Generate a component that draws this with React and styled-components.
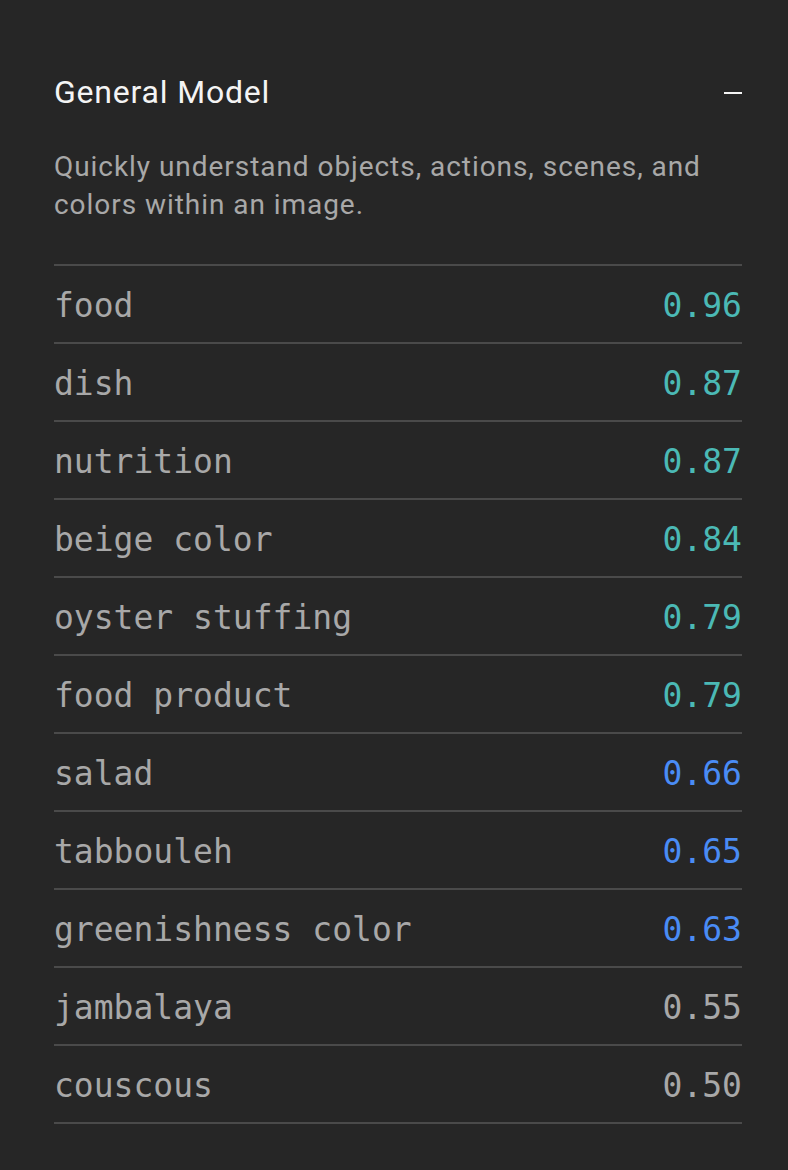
import styled, { createGlobalStyle } from 'styled-components'

const GlobalStyle = createGlobalStyle`
  html, body {
    margin: 0;
    background: #262626;
  }
`

const Panel = styled.section`
  box-sizing: border-box;
  width: 788px;
  min-height: 1170px;
  padding: 72px 46px 0 54px;
  background: #262626;
  font-family: Roboto, "Noto Sans", sans-serif;
`

const Header = styled.header`
  display: flex;
  align-items: center;
  justify-content: space-between;
`

const Title = styled.h2`
  margin: 0;
  font-size: 32px;
  line-height: 40px;
  font-weight: 400;
  letter-spacing: 0.8px;
  color: #f4f4f4;
`

const CollapseButton = styled.button`
  display: flex;
  align-items: center;
  justify-content: center;
  width: 18px;
  height: 18px;
  margin-top: 2px;
  padding: 0;
  border: 0;
  background: none;
  cursor: pointer;
  &::before {
    content: '';
    width: 18px;
    height: 2px;
    background: #f4f4f4;
  }
`

const Description = styled.p`
  margin: 36px 0 0;
  font-size: 28px;
  line-height: 38px;
  letter-spacing: 0.95px;
  color: #a8a8a8;
`

const List = styled.ul`
  list-style: none;
  margin: 40px 0 0;
  padding: 0;
  border-top: 2px solid #4a4a4a;
`

const Row = styled.li`
  display: flex;
  align-items: center;
  justify-content: space-between;
  box-sizing: border-box;
  height: 78px;
  padding-top: 2px;
  border-bottom: 2px solid #4a4a4a;
  font-family: "DejaVu Sans Mono", "Liberation Mono", monospace;
  font-size: 33px;
  color: #a8a8a8;
`

const Score = styled.span`
  color: ${p => p.$tone === 'high' ? '#4bb9b5' : p.$tone === 'mid' ? '#4a8cf5' : '#a8a8a8'};
`

const concepts = [
  ['food', 0.96],
  ['dish', 0.87],
  ['nutrition', 0.87],
  ['beige color', 0.84],
  ['oyster stuffing', 0.79],
  ['food product', 0.79],
  ['salad', 0.66],
  ['tabbouleh', 0.65],
  ['greenishness color', 0.63],
  ['jambalaya', 0.55],
  ['couscous', 0.5],
]

const toneFor = value => value >= 0.7 ? 'high' : value >= 0.6 ? 'mid' : 'low'

export default function App() {
  return (
    <>
      <GlobalStyle />
      <Panel>
        <Header>
          <Title>General Model</Title>
          <CollapseButton aria-label="Collapse" />
        </Header>
        <Description>
          Quickly understand objects, actions, scenes, and colors within an image.
        </Description>
        <List>
          {concepts.map(([name, value]) => (
            <Row key={name}>
              <span>{name}</span>
              <Score $tone={toneFor(value)}>{value.toFixed(2)}</Score>
            </Row>
          ))}
        </List>
      </Panel>
    </>
  )
}
